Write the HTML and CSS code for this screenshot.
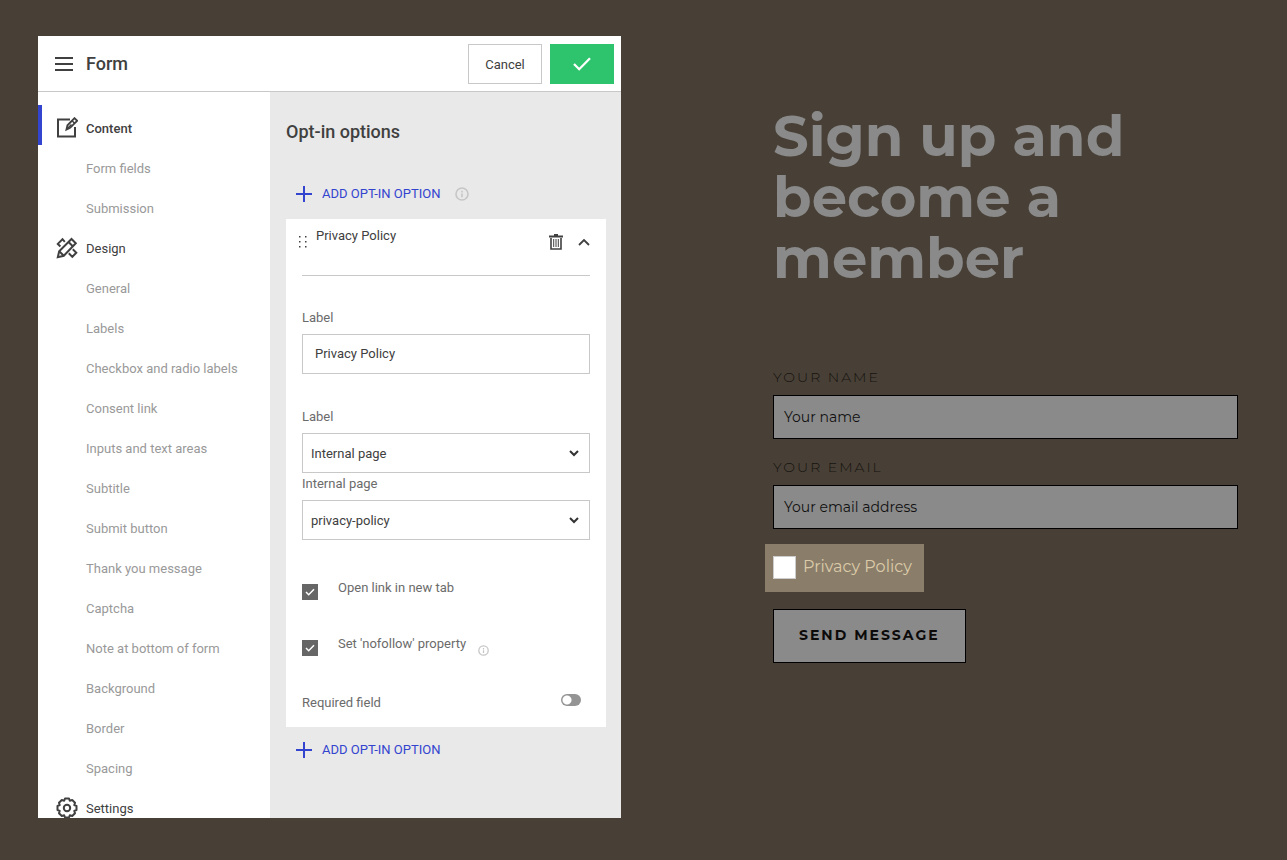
FILE: index.html
```
<!DOCTYPE html>
<html lang="en">
<head>
<meta charset="utf-8">
<meta name="viewport" content="width=device-width, initial-scale=1">
<title>Form</title>
<link rel="stylesheet" href="styles.css">
</head>
<body>
<svg hidden>
  <symbol id="plus" viewBox="0 0 16 16"><path d="M8 0v16M0 8h16" fill="none" stroke="currentColor" stroke-width="2"/></symbol>
  <symbol id="info" viewBox="0 0 14 14"><g fill="none" stroke="currentColor"><circle cx="7" cy="7" r="6" stroke-width="1.600"/><path d="M7 3.800v1.800M7 6.600v3.600" stroke-width="1.600"/></g></symbol>
</svg>
<div class="page">
  <section class="panel" aria-label="Form settings">
    <header class="panel-header">
      <button class="icon-button menu-button" type="button" aria-label="Menu"><svg width="18" height="14" viewBox="0 0 18 14"><path d="M0 1h18M0 7h18M0 13h18" fill="none" stroke="currentColor" stroke-width="2"/></svg></button>
      <h1 class="panel-title">Form</h1>
      <button class="cancel" type="button">Cancel</button>
      <button class="confirm" type="button" aria-label="Save"><svg width="18" height="14" viewBox="0 0 18 14"><path d="M1 7l5.200 5.200L17 1.200" fill="none" stroke="currentColor" stroke-width="2.300"/></svg></button>
    </header>
    <div class="panel-body">
      <nav class="sidebar">
        <a class="nav-group active" href="#content"><svg class="nav-icon" viewBox="0 0 22 22"><g fill="none" stroke="currentColor" stroke-width="2"><path d="M14 2.500H2v17h17V10"/><path d="M10.500 12.500l1-4.200L18.500 1.200l2.600 2.600-7 7z" stroke-width="1.900"/><path d="M16 3.700l2.600 2.600M11.500 11.500l4-4" stroke-width="1.500"/></g></svg>Content</a>
        <a href="#fields">Form fields</a>
        <a href="#submission">Submission</a>
        <a class="nav-group" href="#design"><svg class="nav-icon" viewBox="0 0 22 22"><g fill="none" stroke="currentColor" stroke-width="2"><path d="M1.800 20.200l1.400-6L15.500 2l4.300 4.300L7.800 18.800z"/><path d="M12.500 5l4.300 4.300M3.200 14.200l4.600 4.600"/><path d="M8.800 4.800L6.500 2.200 1.800 6.900l2.600 2.600M12.800 16.300l3.500 3.500 4-4-3.500-3.500"/></g></svg>Design</a>
        <a href="#general">General</a>
        <a href="#labels">Labels</a>
        <a href="#choices">Checkbox and radio labels</a>
        <a href="#consent">Consent link</a>
        <a href="#inputs">Inputs and text areas</a>
        <a href="#subtitle">Subtitle</a>
        <a href="#submit">Submit button</a>
        <a href="#thanks">Thank you message</a>
        <a href="#captcha">Captcha</a>
        <a href="#note">Note at bottom of form</a>
        <a href="#background">Background</a>
        <a href="#border">Border</a>
        <a href="#spacing">Spacing</a>
        <a class="nav-group" href="#settings"><svg class="nav-icon" viewBox="0 0 22 22"><g fill="none" stroke="currentColor" stroke-width="2"><path stroke-linejoin="round" d="M9 1.500h4l.8 2.200 2.400-.7L19 5.800l-.7 2.300 2.200.9v4l-2.200.9.700 2.300-2.800 2.800-2.400-.7-.8 2.200H9l-.8-2.200-2.400.7L3 16.200l.7-2.300-2.200-.9V9l2.200-.9L3 5.800 5.800 3l2.400.7z"/><circle cx="11" cy="11" r="3.200"/></g></svg>Settings</a>
      </nav>
      <main class="options">
        <h2 class="options-title">Opt-in options</h2>
        <div class="add-row">
          <button class="add" type="button"><svg width="16" height="16"><use href="#plus"/></svg>ADD OPT-IN OPTION</button>
          <svg class="info" width="14" height="14"><use href="#info"/></svg>
        </div>
        <form class="card">
          <div class="card-header">
            <svg class="grip" width="8" height="12" viewBox="0 0 8 12"><path fill="currentColor" d="M0 0h1.500v1.500H0zM6 0h1.500v1.500H6zM0 5h1.500v1.500H0zM6 5h1.500v1.500H6zM0 10h1.500v1.500H0zM6 10h1.500v1.500H6z"/></svg>
            <span class="card-title">Privacy Policy</span>
            <button class="icon-button" type="button" aria-label="Delete"><svg width="14" height="16" viewBox="0 0 14 16"><g fill="none" stroke="currentColor"><path d="M0 2.500h14M5 1h4" stroke-width="2"/><path d="M2 4v11h10V4" stroke-width="1.600"/><path d="M4.700 5v8M7 5v8M9.300 5v8" stroke-width="1"/></g></svg></button>
            <button class="icon-button" type="button" aria-label="Collapse"><svg width="12" height="8" viewBox="0 0 12 8"><path d="M1 7l5-5 5 5" fill="none" stroke="currentColor" stroke-width="1.800"/></svg></button>
          </div>
          <div class="field first">
            <label for="option-label">Label</label>
            <input class="control" id="option-label" type="text" value="Privacy Policy">
          </div>
          <div class="field second">
            <label for="link-type">Label</label>
            <select class="control" id="link-type"><option>Internal page</option></select>
          </div>
          <div class="field">
            <label for="link-page">Internal page</label>
            <select class="control" id="link-page"><option>privacy-policy</option></select>
          </div>
          <div class="checks">
            <div class="check"><input id="new-tab" type="checkbox" checked><label for="new-tab">Open link in new tab</label></div>
            <div class="check"><input id="nofollow" type="checkbox" checked><label for="nofollow">Set 'nofollow' property</label><svg class="info" width="11" height="11"><use href="#info"/></svg></div>
          </div>
          <div class="required"><label for="required">Required field</label><input class="toggle" id="required" type="checkbox" role="switch"></div>
        </form>
        <div class="add-row bottom">
          <button class="add" type="button"><svg width="16" height="16"><use href="#plus"/></svg>ADD OPT-IN OPTION</button>
        </div>
      </main>
    </div>
  </section>
  <section class="preview">
    <h2 class="preview-title">Sign up and become a member</h2>
    <form class="signup">
      <div class="signup-field">
        <label for="name">YOUR NAME</label>
        <input id="name" type="text" placeholder="Your name">
      </div>
      <div class="signup-field">
        <label for="email">YOUR EMAIL</label>
        <input id="email" type="email" placeholder="Your email address">
      </div>
      <div class="consent"><input id="consent" type="checkbox" aria-label="Accept privacy policy"><a href="#privacy">Privacy Policy</a></div>
      <button class="send" type="button">SEND MESSAGE</button>
    </form>
  </section>
</div>
</body>
</html>
```
FILE: styles.css
```
* { box-sizing: border-box; }
body {
  margin: 0;
  background: #484036;
  color: #404040;
  font: 13px/16px Roboto, sans-serif;
}
h1, h2 { margin: 0; }
button, input, select { font: inherit; color: inherit; margin: 0; border-radius: 0; }
button { cursor: pointer; }
a { text-decoration: none; color: inherit; }
svg { display: block; flex: none; }
svg[hidden] { display: none; }

.page {
  display: grid;
  grid-template-columns: minmax(0, 583fr) minmax(0, 465fr);
  column-gap: 152px;
  min-height: 100vh;
  padding: 36px 49px 42px 38px;
}

.panel {
  display: flex;
  flex-direction: column;
  height: calc(100vh - 78px);
  overflow: hidden;
  background: #fff;
}
.panel-header {
  display: flex;
  flex: none;
  align-items: center;
  gap: 8px;
  height: 56px;
  padding: 0 7px 0 17px;
  border-bottom: 1px solid #c8c8c8;
}
.panel-title { flex: 1; font-size: 18px; line-height: 24px; font-weight: 500; }
.icon-button { padding: 0; border: 0; background: none; }
.menu-button { margin-right: 5px; }
.cancel { width: 74px; height: 40px; padding: 2px 0 0; border: 1px solid #c8c8c8; background: #fff; }
.confirm {
  display: grid;
  place-items: center;
  width: 64px;
  height: 40px;
  border: 0;
  background: #2ec46d;
  color: #fff;
}
.panel-body { display: flex; flex: 1; min-height: 0; }

.sidebar { flex: none; width: 232px; padding-top: 16px; overflow: hidden; }
.sidebar a {
  display: flex;
  align-items: center;
  height: 40px;
  padding: 2px 0 0 48px;
  color: #999;
}
.sidebar .nav-group { gap: 8px; padding-left: 18px; color: #404040; }
.sidebar .active { position: relative; font-weight: 500; }
.active::before {
  content: "";
  position: absolute;
  top: -3px;
  left: 0;
  width: 4px;
  height: 40px;
  background: #3344cf;
}
.nav-icon { width: 22px; height: 22px; margin-bottom: 2px; }

.options { flex: 1; padding: 28px 15px 0 16px; overflow: hidden; background: #e9e9e9; }
.options-title { font-size: 18px; line-height: 24px; font-weight: 500; }
.add-row { display: flex; align-items: center; gap: 15px; height: 40px; margin: 30px 0 5px; padding-left: 10px; }
.add-row.bottom { margin: 3px 0 0; }
.add { display: flex; align-items: center; gap: 10px; padding: 0; border: 0; background: none; color: #3344cf; line-height: 18px; }
.info { color: #c6c6c6; }

.card { padding: 0 16px 16px; background: #fff; }
.card-header {
  display: flex;
  align-items: center;
  gap: 15px;
  height: 57px;
  padding-bottom: 11px;
  border-bottom: 1px solid #c8c8c8;
}
.grip { margin: 0 -6px 0 -3px; }
.card-title { flex: 1; padding-bottom: 12px; }
.field { display: flex; flex-direction: column; gap: 8px; margin-top: 3px; color: #6b6b6b; }
.field.first { margin-top: 34px; }
.field.second { margin-top: 35px; }
.control {
  width: 100%;
  height: 40px;
  padding: 0 12px 2px;
  border: 1px solid #c8c8c8;
  background: #fff;
  color: #404040;
}
select.control {
  appearance: none;
  padding: 2px 8px 0;
  background: #fff url("data:image/svg+xml,%3Csvg xmlns='http://www.w3.org/2000/svg' width='10' height='7' viewBox='0 0 10 7'%3E%3Cpath d='M1 1l4 4 4-4' fill='none' stroke='%23333' stroke-width='2'/%3E%3C/svg%3E") no-repeat right 10px center;
}
.checks { display: grid; gap: 36px; margin-top: 40px; color: #6b6b6b; }
.check { display: flex; align-items: flex-start; height: 20px; }
.check input {
  appearance: none;
  width: 16px;
  height: 16px;
  margin: 4px 20px 0 0;
  background: #666 url("data:image/svg+xml,%3Csvg xmlns='http://www.w3.org/2000/svg' width='10' height='8' viewBox='0 0 10 8'%3E%3Cpath d='M1 4l2.700 2.700L9 1.300' fill='none' stroke='white' stroke-width='1.500'/%3E%3C/svg%3E") no-repeat center;
}
.check .info { margin: 9px 0 0 12px; }
.required { display: flex; justify-content: space-between; margin-top: 38px; padding-right: 9px; color: #6b6b6b; line-height: 18px; }
.card { padding-bottom: 15px; }
.toggle {
  appearance: none;
  width: 20px;
  height: 12px;
  border-radius: 6px;
  background: radial-gradient(circle at 6px 6px, #fff 4px, #949494 5px);
}

.preview { padding-top: 70px; font-family: Montserrat, Inter, sans-serif; }
.preview-title { max-width: 400px; color: #8a8a8a; font-size: 56px; line-height: 61px; font-weight: 700; }
.signup { display: flex; flex-direction: column; align-items: flex-start; margin-top: 80px; color: #0c0b0a; }
.signup-field { display: flex; flex-direction: column; gap: 10px; width: 100%; margin-bottom: 20px; }
.signup-field label { color: #15120f; font-size: 14px; line-height: 16px; font-weight: 300; letter-spacing: 2px; }
.signup-field input { width: 100%; height: 44px; padding: 0 10px; border: 1px solid #000; background: #8a8a8a; font-size: 14px; }
.signup-field input::placeholder { color: #111; opacity: 1; }
.consent {
  display: flex;
  align-items: center;
  gap: 7px;
  height: 48px;
  margin: -5px 0 17px -8px;
  padding: 0 12px 2px 8px;
  background: #8a7e6a;
  color: #dccba9;
  font-size: 16px;
  font-weight: 400;
}
.consent input { appearance: none; width: 23px; height: 23px; border: 1px solid #ccc; background: #fff; }
.send {
  height: 54px;
  padding: 0 25px 2px;
  border: 1px solid #000;
  background: #8a8a8a;
  font-size: 14px;
  font-weight: 700;
  letter-spacing: 2px;
}
```
